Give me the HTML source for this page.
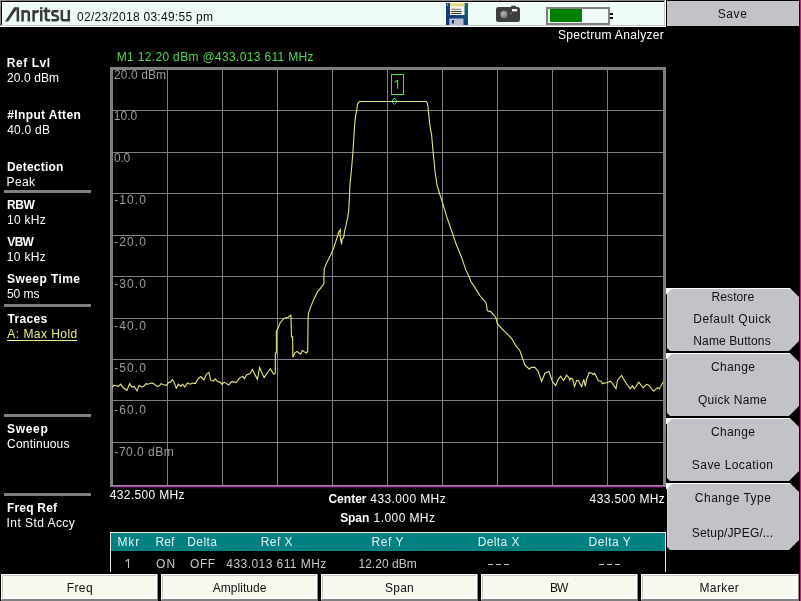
<!DOCTYPE html><html><head><meta charset="utf-8"><style>html,body{margin:0;padding:0;background:#000;width:801px;height:601px;overflow:hidden}svg{display:block;will-change:transform}</style></head><body><svg width="801" height="601" viewBox="0 0 801 601" shape-rendering="crispEdges"><rect x="0" y="0" width="666" height="27" fill="#eefaf6"/>
<rect x="0" y="0" width="665" height="1" fill="#888888"/>
<rect x="0" y="0" width="1" height="26" fill="#888888"/>
<rect x="1" y="1" width="663" height="1" fill="#000000"/>
<rect x="1" y="1" width="1" height="24" fill="#000000"/>
<rect x="2" y="2" width="662" height="1" fill="#ffffff"/>
<rect x="2" y="2" width="1" height="23" fill="#ffffff"/>
<rect x="2" y="25" width="663" height="1" fill="#c4c8c4"/>
<rect x="664" y="2" width="1" height="24" fill="#c4c8c4"/>
<rect x="0" y="26" width="666" height="1" fill="#ffffff"/>
<rect x="665" y="1" width="1" height="26" fill="#ffffff"/>
<g fill="#3a3a3a" stroke="none" shape-rendering="geometricPrecision"><polygon points="5,21.5 8.2,21.5 16.6,9.3 16.6,21.5 19.1,21.5 19.1,7.2 14.2,7.2"/><rect x="40" y="7.2" width="2.5" height="2"/><rect x="40" y="10" width="2.5" height="11.5"/></g>
<g fill="none" stroke="#3a3a3a" stroke-width="2.5" shape-rendering="geometricPrecision"><path d="M22.6,21.5 V10 M22.6,12.6 Q24,11.2 26.2,11.2 Q28.8,11.2 28.8,13.6 V21.5"/><path d="M33.6,21.5 V10 M33.6,13.4 Q35,11.2 38.8,11.2"/><path d="M46,7.5 V18.6 Q46,20.3 48,20.3 H50.2 M43.3,11 H50.2"/><path d="M58.4,11.2 H54.2 Q52.4,11.2 52.4,13.2 Q52.4,15 54.2,15.4 L56.4,15.9 Q58,16.3 58,18.3 Q58,20.3 56,20.3 H51.4"/><path d="M61.8,10 V18.2 Q61.8,20.3 64,20.3 H68.8 M68.8,10 V21.5"/></g>
<defs><linearGradient id="fl" x1="0" y1="1" x2="1" y2="0"><stop offset="0" stop-color="#0c2a80"/><stop offset="0.5" stop-color="#164678"/><stop offset="1" stop-color="#186a70"/></linearGradient><radialGradient id="lens" cx="0.4" cy="0.4" r="0.6"><stop offset="0" stop-color="#b8b8b8"/><stop offset="1" stop-color="#707070"/></radialGradient></defs>
<g shape-rendering="geometricPrecision">
<rect x="446" y="3" width="22" height="22" fill="url(#fl)"/>
<rect x="450" y="3" width="14.5" height="12" fill="#f4f4e8"/>
<rect x="450" y="3.5" width="14.5" height="2.6" fill="#e0d870"/>
<rect x="451.3" y="8.8" width="9.5" height="0.9" fill="#606060"/>
<rect x="451.3" y="11" width="10.5" height="1" fill="#303030"/>
<rect x="451.3" y="13" width="10" height="1" fill="#303030"/>
<rect x="449.3" y="18.5" width="14.2" height="6.5" fill="#b8c0cc"/>
<rect x="452" y="20" width="1.8" height="3.5" fill="#102050"/>
<rect x="447" y="4.5" width="1" height="1" fill="#ffffff"/>
<rect x="496" y="7" width="24" height="15" rx="2.5" fill="#3e3e3e"/>
<rect x="511" y="5.8" width="5" height="2" rx="0.8" fill="#3e3e3e"/>
<circle cx="504" cy="14.5" r="4.5" fill="#2a2a2a"/>
<circle cx="504" cy="14.5" r="3.9" fill="url(#lens)"/>
<rect x="512" y="9" width="5.2" height="2.4" fill="#f0f0f0"/>
<circle cx="510.8" cy="13.3" r="0.8" fill="#50c050"/>
</g>
<rect x="547" y="8" width="62" height="15.5" fill="none" stroke="#808080" stroke-width="2"/>
<rect x="550" y="9" width="32" height="13" fill="#008000"/>
<rect x="610" y="13" width="3" height="1.8" fill="#101010"/>
<rect x="610" y="17" width="3" height="1.8" fill="#101010"/>
<rect x="667" y="1" width="132" height="25" fill="#c6c6cc"/>
<rect x="668" y="2" width="130" height="23" fill="#c2c2c8"/>
<rect x="800" y="0" width="1" height="601" fill="#d01880"/>
<rect x="4" y="190" width="87" height="3" fill="#808080"/>
<rect x="4" y="304" width="87" height="3" fill="#808080"/>
<rect x="4" y="414" width="87" height="3" fill="#808080"/>
<rect x="4" y="493" width="87" height="3" fill="#808080"/>
<rect x="7" y="340" width="70" height="1" fill="#ecec84"/>
<rect x="167" y="69" width="1" height="416" fill="#808080"/>
<rect x="222" y="69" width="1" height="416" fill="#808080"/>
<rect x="277" y="69" width="1" height="416" fill="#808080"/>
<rect x="332" y="69" width="1" height="416" fill="#808080"/>
<rect x="387" y="69" width="1" height="416" fill="#808080"/>
<rect x="442" y="69" width="1" height="416" fill="#808080"/>
<rect x="497" y="69" width="1" height="416" fill="#808080"/>
<rect x="552" y="69" width="1" height="416" fill="#808080"/>
<rect x="607" y="69" width="1" height="416" fill="#808080"/>
<rect x="112" y="110" width="551" height="1" fill="#808080"/>
<rect x="112" y="152" width="551" height="1" fill="#808080"/>
<rect x="112" y="193" width="551" height="1" fill="#808080"/>
<rect x="112" y="235" width="551" height="1" fill="#808080"/>
<rect x="112" y="276" width="551" height="1" fill="#808080"/>
<rect x="112" y="318" width="551" height="1" fill="#808080"/>
<rect x="112" y="359" width="551" height="1" fill="#808080"/>
<rect x="112" y="400" width="551" height="1" fill="#808080"/>
<rect x="112" y="442" width="551" height="1" fill="#808080"/>
<rect x="110" y="67" width="556" height="3" fill="#808080"/>
<rect x="110" y="67" width="3" height="420" fill="#808080"/>
<rect x="663" y="67" width="3" height="420" fill="#808080"/>
<rect x="113" y="485" width="550" height="1" fill="#a080a0"/>
<rect x="113" y="486" width="550" height="1" fill="#a848a8"/>
<rect x="113" y="487" width="550" height="1" fill="#3a0c3a"/>
<rect x="113" y="488" width="550" height="1" fill="#140414"/>
<text x="113.92" y="79.00" font-family='"Liberation Sans", sans-serif' font-size="12" fill="#9c9c9c" textLength="52.18" lengthAdjust="spacing">20.0 dBm</text>
<text x="113.70" y="120.00" font-family='"Liberation Sans", sans-serif' font-size="12" fill="#9c9c9c" textLength="23.58" lengthAdjust="spacing">10.0</text>
<text x="114.03" y="162.00" font-family='"Liberation Sans", sans-serif' font-size="12" fill="#9c9c9c" textLength="16.13" lengthAdjust="spacing">0.0</text>
<text x="114.27" y="204.00" font-family='"Liberation Sans", sans-serif' font-size="12" fill="#9c9c9c" textLength="31.58" lengthAdjust="spacing">-10.0</text>
<text x="114.27" y="246.00" font-family='"Liberation Sans", sans-serif' font-size="12" fill="#9c9c9c" textLength="31.58" lengthAdjust="spacing">-20.0</text>
<text x="114.27" y="288.00" font-family='"Liberation Sans", sans-serif' font-size="12" fill="#9c9c9c" textLength="31.58" lengthAdjust="spacing">-30.0</text>
<text x="114.27" y="330.00" font-family='"Liberation Sans", sans-serif' font-size="12" fill="#9c9c9c" textLength="31.58" lengthAdjust="spacing">-40.0</text>
<text x="114.27" y="372.00" font-family='"Liberation Sans", sans-serif' font-size="12" fill="#9c9c9c" textLength="31.58" lengthAdjust="spacing">-50.0</text>
<text x="114.27" y="414.00" font-family='"Liberation Sans", sans-serif' font-size="12" fill="#9c9c9c" textLength="31.58" lengthAdjust="spacing">-60.0</text>
<text x="114.47" y="456.00" font-family='"Liberation Sans", sans-serif' font-size="12" fill="#9c9c9c" textLength="59.18" lengthAdjust="spacing">-70.0 dBm</text>
<polyline points="112.2,387.0 113.9,385.3 116.2,385.8 118.4,386.4 120.7,384.2 122.9,387.5 126.9,390.3 129.7,383.6 131.9,387.0 134.2,386.4 137.0,390.9 139.2,385.3 141.5,387.0 143.7,386.4 146.0,383.6 148.2,384.2 151.0,383.0 153.3,383.6 157.2,386.4 159.4,385.8 161.1,383.6 163.9,384.7 166.7,385.3 168.4,382.5 170.7,381.9 172.4,379.7 174.0,381.9 176.3,388.1 178.5,384.2 180.8,386.4 182.5,384.2 184.7,387.0 187.5,383.0 190.3,384.2 192.6,383.0 195.4,383.6 197.6,379.7 200.6,376.5 204.0,379.9 206.2,374.3 209.0,372.6 210.7,379.9 213.5,381.0 215.2,378.8 217.5,381.6 220.3,382.1 222.0,384.4 224.2,382.1 228.7,385.0 231.5,381.6 234.3,382.1 236.0,382.7 240.0,377.6 242.8,376.5 244.4,378.8 246.7,374.8 250.0,373.7 252.3,369.4 257.4,379.3 259.6,367.5 264.1,377.6 270.3,368.7 273.7,374.3 275.3,373.1 275.3,353.0 276.4,353.0 276.4,331.4 278.0,328.6 280.1,322.7 283.9,318.4 288.2,317.3 290.9,315.1 291.5,336.8 292.6,336.8 292.9,357.3 294.7,353.0 296.9,351.4 299.1,353.0 300.7,354.1 302.3,350.3 304.5,351.9 306.1,353.0 307.7,351.4 308.1,319.8 308.4,313.4 311.1,305.9 314.0,298.9 317.5,291.9 320.4,288.4 323.9,283.8 323.9,276.2 324.4,268.0 326.8,262.8 330.3,255.8 333.3,249.1 337.9,235.0 338.7,232.0 340.4,229.6 340.0,235.8 341.6,244.5 342.0,239.1 343.7,237.5 344.5,231.6 346.6,222.5 347.9,216.7 348.7,210.0 349.3,200.0 350.0,183.8 351.5,169.2 352.9,152.5 354.3,130.0 354.6,125.3 355.5,116.3 356.7,110.7 357.5,104.0 358.7,102.3 359.3,101.5 426.3,101.5 427.3,103.3 428.0,106.3 428.3,111.0 428.6,113.6 429.6,122.9 430.6,129.6 431.6,134.9 433.0,151.0 435.0,171.0 437.0,185.0 440.0,195.0 441.7,200.0 446.7,216.6 453.3,235.8 455.8,243.3 461.6,257.4 465.8,269.9 469.1,276.5 470.8,281.5 474.9,287.4 480.0,295.8 485.8,302.5 487.5,310.8 490.8,311.6 495.8,317.5 497.5,324.1 504.1,330.8 511.6,338.3 515.8,345.7 519.9,350.7 524.9,364.9 529.1,369.0 531.6,367.4 534.9,367.4 538.2,371.5 541.6,381.5 544.9,373.2 549.0,371.5 552.4,381.5 555.7,385.7 558.0,379.7 560.6,376.3 563.6,380.5 566.6,375.2 568.9,377.5 569.6,380.1 570.7,378.2 572.6,379.0 574.5,386.5 576.7,380.5 578.2,380.5 581.6,386.5 583.8,379.3 585.3,386.5 586.5,379.7 589.1,372.6 591.7,373.0 593.2,374.5 594.7,373.4 598.4,380.8 601.1,381.2 602.6,383.8 603.7,383.1 606.7,382.7 610.4,381.2 612.2,383.2 616.0,388.5 617.5,380.2 621.6,375.4 624.2,380.2 630.2,388.8 632.5,385.8 634.3,388.8 638.8,382.1 643.0,387.7 646.7,384.3 649.0,385.5 653.4,391.1 657.9,387.7 659.4,388.8 663.2,382.1" fill="none" stroke="#e8e880" stroke-width="1.1" stroke-linejoin="miter" shape-rendering="geometricPrecision"/>
<rect x="391.5" y="74.5" width="12" height="20" fill="none" stroke="#40e040" stroke-width="1"/>
<polygon points="394.5,98 397.5,101.3 394.5,104.6 391.5,101.3" fill="none" stroke="#40e040" stroke-width="1" shape-rendering="geometricPrecision"/>
<rect x="110" y="532" width="556" height="1" fill="#e0f0f0"/>
<rect x="110" y="533" width="555" height="18" fill="#008080"/>
<rect x="110" y="532" width="1" height="40" fill="#e8e8e8"/>
<rect x="665" y="532" width="1" height="40" fill="#e8e8e8"/>
<rect x="488" y="564" width="5" height="1" fill="#c8c8c8"/>
<rect x="496" y="564" width="5" height="1" fill="#c8c8c8"/>
<rect x="504" y="564" width="5" height="1" fill="#c8c8c8"/>
<rect x="599" y="564" width="5" height="1" fill="#c8c8c8"/>
<rect x="607" y="564" width="5" height="1" fill="#c8c8c8"/>
<rect x="615" y="564" width="5" height="1" fill="#c8c8c8"/>
<rect x="1" y="574" width="157" height="27" fill="#f8faf0"/>
<rect x="1" y="574" width="157" height="1" fill="#ffffff"/>
<rect x="2" y="575" width="154" height="1" fill="#c8ccc4"/>
<rect x="1" y="574" width="1" height="25" fill="#ffffff"/>
<rect x="2" y="575" width="1" height="24" fill="#c8ccc4"/>
<rect x="156" y="575" width="1" height="24" fill="#ffffff"/>
<rect x="157" y="574" width="1" height="25" fill="#888888"/>
<rect x="2" y="598" width="155" height="1" fill="#ffffff"/>
<rect x="1" y="599" width="157" height="2" fill="#808080"/>
<rect x="161" y="574" width="157" height="27" fill="#f8faf0"/>
<rect x="161" y="574" width="157" height="1" fill="#ffffff"/>
<rect x="162" y="575" width="154" height="1" fill="#c8ccc4"/>
<rect x="161" y="574" width="1" height="25" fill="#ffffff"/>
<rect x="162" y="575" width="1" height="24" fill="#c8ccc4"/>
<rect x="316" y="575" width="1" height="24" fill="#ffffff"/>
<rect x="317" y="574" width="1" height="25" fill="#888888"/>
<rect x="162" y="598" width="155" height="1" fill="#ffffff"/>
<rect x="161" y="599" width="157" height="2" fill="#808080"/>
<rect x="321" y="574" width="157" height="27" fill="#f8faf0"/>
<rect x="321" y="574" width="157" height="1" fill="#ffffff"/>
<rect x="322" y="575" width="154" height="1" fill="#c8ccc4"/>
<rect x="321" y="574" width="1" height="25" fill="#ffffff"/>
<rect x="322" y="575" width="1" height="24" fill="#c8ccc4"/>
<rect x="476" y="575" width="1" height="24" fill="#ffffff"/>
<rect x="477" y="574" width="1" height="25" fill="#888888"/>
<rect x="322" y="598" width="155" height="1" fill="#ffffff"/>
<rect x="321" y="599" width="157" height="2" fill="#808080"/>
<rect x="481" y="574" width="157" height="27" fill="#f8faf0"/>
<rect x="481" y="574" width="157" height="1" fill="#ffffff"/>
<rect x="482" y="575" width="154" height="1" fill="#c8ccc4"/>
<rect x="481" y="574" width="1" height="25" fill="#ffffff"/>
<rect x="482" y="575" width="1" height="24" fill="#c8ccc4"/>
<rect x="636" y="575" width="1" height="24" fill="#ffffff"/>
<rect x="637" y="574" width="1" height="25" fill="#888888"/>
<rect x="482" y="598" width="155" height="1" fill="#ffffff"/>
<rect x="481" y="599" width="157" height="2" fill="#808080"/>
<rect x="641" y="574" width="158" height="27" fill="#f8faf0"/>
<rect x="641" y="574" width="158" height="1" fill="#ffffff"/>
<rect x="642" y="575" width="155" height="1" fill="#c8ccc4"/>
<rect x="641" y="574" width="1" height="25" fill="#ffffff"/>
<rect x="642" y="575" width="1" height="24" fill="#c8ccc4"/>
<rect x="797" y="575" width="1" height="24" fill="#ffffff"/>
<rect x="798" y="574" width="1" height="25" fill="#888888"/>
<rect x="642" y="598" width="156" height="1" fill="#ffffff"/>
<rect x="641" y="599" width="158" height="2" fill="#808080"/>
<polygon points="667,288 790,288 799,297 799,341 789,351 670,351 667,348" fill="#c2c2c8" shape-rendering="geometricPrecision"/>
<rect x="667" y="288" width="123" height="1" fill="#ffffff"/>
<rect x="667" y="293" width="1" height="55" fill="#d2d2d8"/>
<polygon points="666,288 672.5,288 666,294.5" fill="#ffffff" shape-rendering="geometricPrecision"/>
<polygon points="667,353 790,353 799,362 799,406 789,416 670,416 667,413" fill="#c2c2c8" shape-rendering="geometricPrecision"/>
<rect x="667" y="353" width="123" height="1" fill="#ffffff"/>
<rect x="667" y="358" width="1" height="55" fill="#d2d2d8"/>
<polygon points="666,353 672.5,353 666,359.5" fill="#ffffff" shape-rendering="geometricPrecision"/>
<polygon points="667,418 790,418 799,427 799,471 789,481 670,481 667,478" fill="#c2c2c8" shape-rendering="geometricPrecision"/>
<rect x="667" y="418" width="123" height="1" fill="#ffffff"/>
<rect x="667" y="423" width="1" height="55" fill="#d2d2d8"/>
<polygon points="666,418 672.5,418 666,424.5" fill="#ffffff" shape-rendering="geometricPrecision"/>
<polygon points="667,483 790,483 799,492 799,540 789,550 670,550 667,547" fill="#c2c2c8" shape-rendering="geometricPrecision"/>
<rect x="667" y="483" width="123" height="1" fill="#ffffff"/>
<rect x="667" y="488" width="1" height="59" fill="#d2d2d8"/>
<polygon points="666,483 672.5,483 666,489.5" fill="#ffffff" shape-rendering="geometricPrecision"/>
<text x="77.03" y="21.00" font-family='"Liberation Sans", sans-serif' font-size="12" fill="#101010" textLength="135.91" lengthAdjust="spacing">02/23/2018 03:49:55 pm</text>
<text x="717.75" y="18.00" font-family='"Liberation Sans", sans-serif' font-size="12" fill="#101010" textLength="29.07" lengthAdjust="spacing">Save</text>
<text x="557.95" y="39.00" font-family='"Liberation Sans", sans-serif' font-size="12" fill="#ffffff" textLength="105.79" lengthAdjust="spacing">Spectrum Analyzer</text>
<text x="6.78" y="67.00" font-family='"Liberation Sans", sans-serif' font-size="12" font-weight="bold" fill="#ffffff" textLength="43.39" lengthAdjust="spacing">Ref Lvl</text>
<text x="6.92" y="82.00" font-family='"Liberation Sans", sans-serif' font-size="12" fill="#ffffff" textLength="52.20" lengthAdjust="spacing">20.0 dBm</text>
<text x="7.28" y="119.00" font-family='"Liberation Sans", sans-serif' font-size="12" font-weight="bold" fill="#ffffff" textLength="73.53" lengthAdjust="spacing">#Input Atten</text>
<text x="7.21" y="134.00" font-family='"Liberation Sans", sans-serif' font-size="12" fill="#ffffff" textLength="42.74" lengthAdjust="spacing">40.0 dB</text>
<text x="6.98" y="171.00" font-family='"Liberation Sans", sans-serif' font-size="12" font-weight="bold" fill="#ffffff" textLength="56.41" lengthAdjust="spacing">Detection</text>
<text x="6.61" y="186.00" font-family='"Liberation Sans", sans-serif' font-size="12" fill="#ffffff" textLength="28.30" lengthAdjust="spacing">Peak</text>
<text x="6.98" y="209.00" font-family='"Liberation Sans", sans-serif' font-size="12" font-weight="bold" fill="#ffffff" textLength="27.77" lengthAdjust="spacing">RBW</text>
<text x="6.90" y="224.00" font-family='"Liberation Sans", sans-serif' font-size="12" fill="#ffffff" textLength="38.91" lengthAdjust="spacing">10 kHz</text>
<text x="7.35" y="246.00" font-family='"Liberation Sans", sans-serif' font-size="12" font-weight="bold" fill="#ffffff" textLength="26.60" lengthAdjust="spacing">VBW</text>
<text x="6.80" y="261.00" font-family='"Liberation Sans", sans-serif' font-size="12" fill="#ffffff" textLength="38.85" lengthAdjust="spacing">10 kHz</text>
<text x="6.94" y="283.00" font-family='"Liberation Sans", sans-serif' font-size="12" font-weight="bold" fill="#ffffff" textLength="73.12" lengthAdjust="spacing">Sweep Time</text>
<text x="6.93" y="298.00" font-family='"Liberation Sans", sans-serif' font-size="12" fill="#ffffff" textLength="32.66" lengthAdjust="spacing">50 ms</text>
<text x="7.42" y="323.00" font-family='"Liberation Sans", sans-serif' font-size="12" font-weight="bold" fill="#ffffff" textLength="39.76" lengthAdjust="spacing">Traces</text>
<text x="7.35" y="338.00" font-family='"Liberation Sans", sans-serif' font-size="12" fill="#ecec84" textLength="69.96" lengthAdjust="spacing">A: Max Hold</text>
<text x="7.04" y="433.00" font-family='"Liberation Sans", sans-serif' font-size="12" font-weight="bold" fill="#ffffff" textLength="40.74" lengthAdjust="spacing">Sweep</text>
<text x="7.12" y="448.00" font-family='"Liberation Sans", sans-serif' font-size="12" fill="#ffffff" textLength="62.33" lengthAdjust="spacing">Continuous</text>
<text x="6.98" y="512.00" font-family='"Liberation Sans", sans-serif' font-size="12" font-weight="bold" fill="#ffffff" textLength="50.06" lengthAdjust="spacing">Freq Ref</text>
<text x="6.49" y="527.00" font-family='"Liberation Sans", sans-serif' font-size="12" fill="#ffffff" textLength="68.31" lengthAdjust="spacing">Int Std Accy</text>
<text x="116.71" y="61.00" font-family='"Liberation Sans", sans-serif' font-size="12" fill="#50d850" textLength="196.86" lengthAdjust="spacing">M1 12.20 dBm @433.013 611 MHz</text>
<text x="109.71" y="499.00" font-family='"Liberation Sans", sans-serif' font-size="12" fill="#ffffff" textLength="74.90" lengthAdjust="spacing">432.500 MHz</text>
<text x="589.61" y="503.00" font-family='"Liberation Sans", sans-serif' font-size="12" fill="#ffffff" textLength="75.24" lengthAdjust="spacing">433.500 MHz</text>
<text x="328.42" y="503.00" font-family='"Liberation Sans", sans-serif' font-size="12" font-weight="bold" fill="#ffffff" textLength="38.09" lengthAdjust="spacing">Center</text>
<text x="370.31" y="503.00" font-family='"Liberation Sans", sans-serif' font-size="12" fill="#ffffff" textLength="75.32" lengthAdjust="spacing">433.000 MHz</text>
<text x="340.14" y="522.00" font-family='"Liberation Sans", sans-serif' font-size="12" font-weight="bold" fill="#ffffff" textLength="29.15" lengthAdjust="spacing">Span</text>
<text x="373.60" y="522.00" font-family='"Liberation Sans", sans-serif' font-size="12" fill="#ffffff" textLength="61.35" lengthAdjust="spacing">1.000 MHz</text>
<text x="117.41" y="546.00" font-family='"Liberation Sans", sans-serif' font-size="12" fill="#e8f4f4" textLength="21.75" lengthAdjust="spacing">Mkr</text>
<text x="155.41" y="546.00" font-family='"Liberation Sans", sans-serif' font-size="12" fill="#e8f4f4" textLength="18.86" lengthAdjust="spacing">Ref</text>
<text x="187.31" y="546.00" font-family='"Liberation Sans", sans-serif' font-size="12" fill="#e8f4f4" textLength="29.59" lengthAdjust="spacing">Delta</text>
<text x="260.71" y="546.00" font-family='"Liberation Sans", sans-serif' font-size="12" fill="#e8f4f4" textLength="31.77" lengthAdjust="spacing">Ref X</text>
<text x="371.41" y="546.00" font-family='"Liberation Sans", sans-serif' font-size="12" fill="#e8f4f4" textLength="32.12" lengthAdjust="spacing">Ref Y</text>
<text x="477.66" y="546.00" font-family='"Liberation Sans", sans-serif' font-size="12" fill="#e8f4f4" textLength="41.77" lengthAdjust="spacing">Delta X</text>
<text x="588.61" y="546.00" font-family='"Liberation Sans", sans-serif' font-size="12" fill="#e8f4f4" textLength="42.24" lengthAdjust="spacing">Delta Y</text>
<text x="155.96" y="568.00" font-family='"Liberation Sans", sans-serif' font-size="12" fill="#c8c8c8" textLength="19.21" lengthAdjust="spacing">ON</text>
<text x="190.06" y="568.00" font-family='"Liberation Sans", sans-serif' font-size="12" fill="#c8c8c8" textLength="24.99" lengthAdjust="spacing">OFF</text>
<text x="226.31" y="568.00" font-family='"Liberation Sans", sans-serif' font-size="12" fill="#c8c8c8" textLength="99.95" lengthAdjust="spacing">433.013 611 MHz</text>
<text x="358.40" y="568.00" font-family='"Liberation Sans", sans-serif' font-size="12" fill="#c8c8c8" textLength="58.45" lengthAdjust="spacing">12.20 dBm</text>
<text x="66.66" y="592.00" font-family='"Liberation Sans", sans-serif' font-size="12" fill="#101010" textLength="25.97" lengthAdjust="spacing">Freq</text>
<text x="212.75" y="592.00" font-family='"Liberation Sans", sans-serif' font-size="12" fill="#101010" textLength="53.72" lengthAdjust="spacing">Amplitude</text>
<text x="385.00" y="592.00" font-family='"Liberation Sans", sans-serif' font-size="12" fill="#101010" textLength="28.75" lengthAdjust="spacing">Span</text>
<text x="549.91" y="592.00" font-family='"Liberation Sans", sans-serif' font-size="12" fill="#101010" textLength="18.39" lengthAdjust="spacing">BW</text>
<text x="699.51" y="592.00" font-family='"Liberation Sans", sans-serif' font-size="12" fill="#101010" textLength="39.16" lengthAdjust="spacing">Marker</text>
<text x="711.61" y="301.00" font-family='"Liberation Sans", sans-serif' font-size="12" fill="#101010" textLength="42.52" lengthAdjust="spacing">Restore</text>
<text x="693.31" y="323.00" font-family='"Liberation Sans", sans-serif' font-size="12" fill="#101010" textLength="77.56" lengthAdjust="spacing">Default Quick</text>
<text x="693.31" y="345.00" font-family='"Liberation Sans", sans-serif' font-size="12" fill="#101010" textLength="77.35" lengthAdjust="spacing">Name Buttons</text>
<text x="711.02" y="371.00" font-family='"Liberation Sans", sans-serif' font-size="12" fill="#101010" textLength="43.85" lengthAdjust="spacing">Change</text>
<text x="697.96" y="404.00" font-family='"Liberation Sans", sans-serif' font-size="12" fill="#101010" textLength="68.75" lengthAdjust="spacing">Quick Name</text>
<text x="711.02" y="436.00" font-family='"Liberation Sans", sans-serif' font-size="12" fill="#101010" textLength="43.85" lengthAdjust="spacing">Change</text>
<text x="691.85" y="469.00" font-family='"Liberation Sans", sans-serif' font-size="12" fill="#101010" textLength="81.14" lengthAdjust="spacing">Save Location</text>
<text x="694.82" y="502.00" font-family='"Liberation Sans", sans-serif' font-size="12" fill="#101010" textLength="76.07" lengthAdjust="spacing">Change Type</text>
<text x="691.85" y="537.00" font-family='"Liberation Sans", sans-serif' font-size="12" fill="#101010" textLength="81.32" lengthAdjust="spacing">Setup/JPEG/...</text>
<path d="M125.6,561.6 L128.4,559.2 M128.5,559 V568" fill="none" stroke="#c8c8c8" stroke-width="1.1" shape-rendering="geometricPrecision"/>
<path d="M394.7,82.4 L397.4,80.2 M397.6,80 V88.8" fill="none" stroke="#40e040" stroke-width="1.1" shape-rendering="geometricPrecision"/></svg></body></html>
